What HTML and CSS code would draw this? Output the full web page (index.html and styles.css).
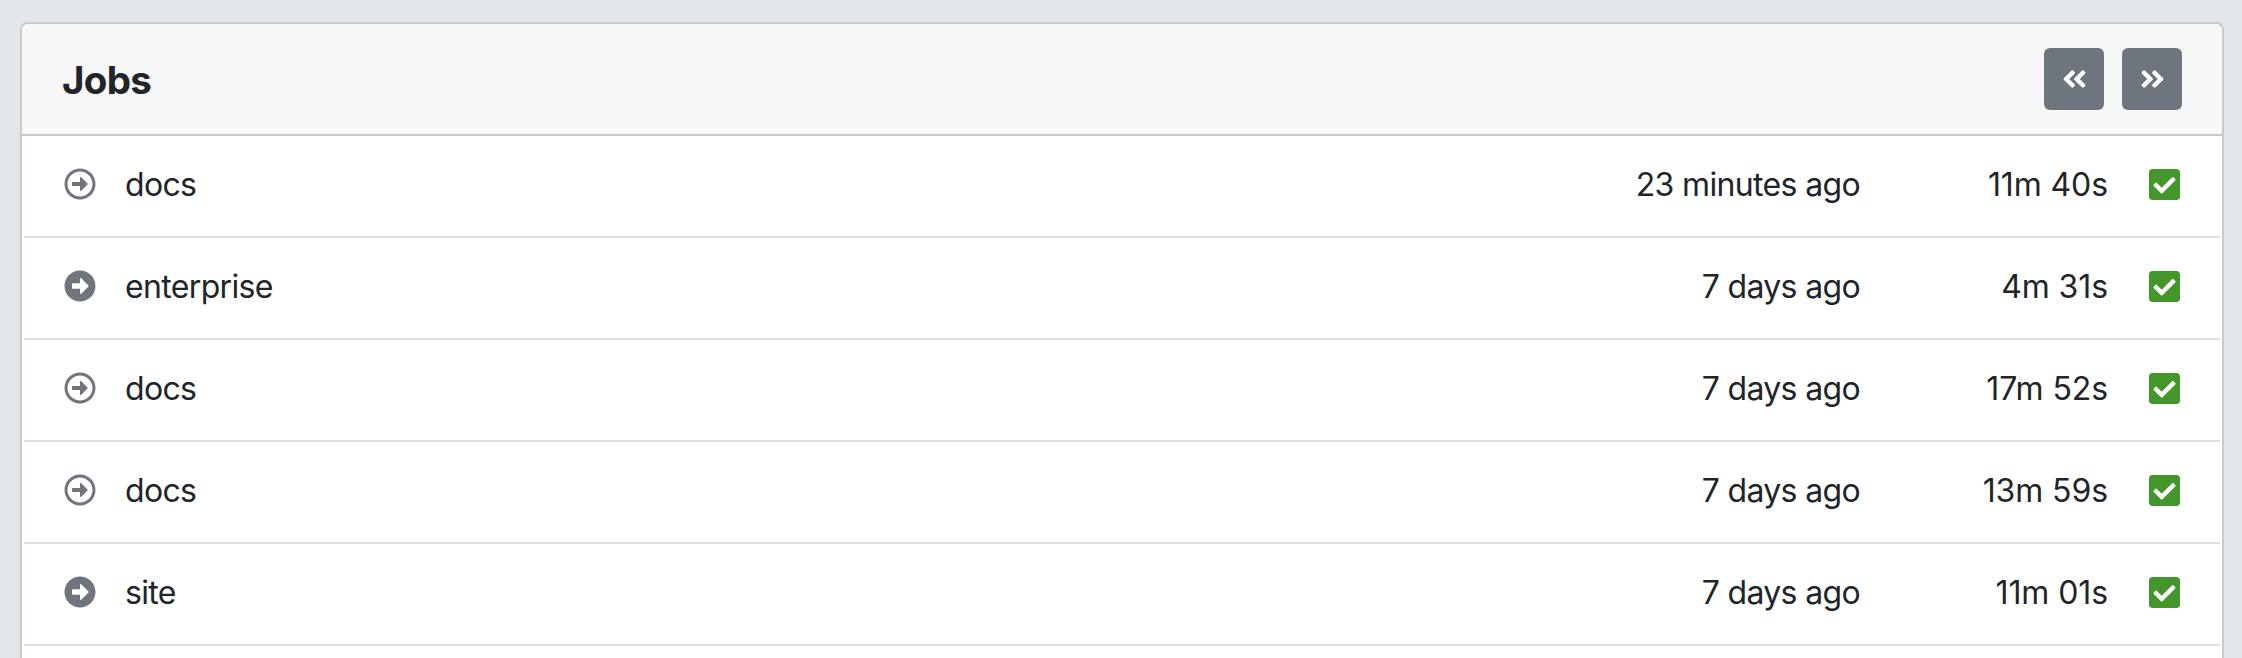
FILE: index.html
```html
<!DOCTYPE html>
<html lang="en">
<head>
<meta charset="utf-8">
<title>Jobs</title>
<link rel="stylesheet" href="styles.css">
</head>
<body>
<svg class="sprite" aria-hidden="true">
  <symbol id="circle-outline" viewBox="0 0 512 512"><path d="M504 256C504 119 393 8 256 8S8 119 8 256s111 248 248 248 248-111 248-248zm-448 0c0-110.500 89.500-200 200-200s200 89.500 200 200-89.500 200-200 200S56 366.500 56 256zm72 20v-40c0-6.600 5.400-12 12-12h116v-67c0-10.700 12.900-16 20.500-8.500l99 99c4.700 4.700 4.700 12.300 0 17l-99 99c-7.600 7.600-20.500 2.200-20.500-8.500v-67H140c-6.600 0-12-5.400-12-12z"/></symbol>
  <symbol id="circle-solid" viewBox="0 0 512 512"><path d="M256 8c137 0 248 111 248 248S393 504 256 504 8 393 8 256 119 8 256 8zM140 300h116v70.900c0 10.700 13 16.100 20.500 8.500l114.300-114.900c4.700-4.700 4.700-12.200 0-16.900l-114.300-115c-7.600-7.600-20.500-2.200-20.500 8.500V212H140c-6.600 0-12 5.400-12 12v64c0 6.600 5.400 12 12 12z"/></symbol>
  <symbol id="check" viewBox="0 32 448 448"><path d="M400 480H48c-26.510 0-48-21.490-48-48V80c0-26.510 21.490-48 48-48h352c26.510 0 48 21.490 48 48v352c0 26.510-21.490 48-48 48zm-204.686-98.059l184-184c6.248-6.248 6.248-16.379 0-22.627l-22.627-22.627c-6.248-6.248-16.379-6.249-22.628 0L184 302.745l-70.059-70.059c-6.248-6.248-16.379-6.248-22.628 0l-22.627 22.627c-6.248 6.248-6.248 16.379 0 22.627l104 104c6.249 6.250 16.379 6.250 22.628.001z"/></symbol>
  <symbol id="angles" viewBox="0 0 448 512"><path d="M223.700 239l136-136c9.400-9.400 24.600-9.400 33.900 0l22.600 22.600c9.400 9.400 9.400 24.600 0 33.900L319.900 256l96.400 96.400c9.400 9.400 9.400 24.600 0 33.900L393.700 409c-9.400 9.400-24.600 9.400-33.900 0l-136-136c-9.500-9.400-9.500-24.600-.1-34zm-192 34l136 136c9.400 9.400 24.600 9.400 33.900 0l22.600-22.600c9.400-9.400 9.400-24.600 0-33.900L127.900 256l96.400-96.400c9.400-9.400 9.400-24.600 0-33.900L201.700 103c-9.400-9.400-24.600-9.400-33.900 0l-136 136c-9.500 9.400-9.500 24.600-.1 34z"/></symbol>
</svg>
<main class="card">
  <header class="card-header">
    <h1 class="title">Jobs</h1>
    <nav class="pager">
      <button class="btn" aria-label="Previous"><svg class="angle"><use href="#angles"/></svg></button>
      <button class="btn" aria-label="Next"><svg class="angle flip"><use href="#angles"/></svg></button>
    </nav>
  </header>
  <ul class="jobs">
    <li class="job"><svg class="kind"><use href="#circle-outline"/></svg><span class="name">docs</span><span class="when">23 minutes ago</span><span class="took">11m 40s</span><svg class="status"><use href="#check"/></svg></li>
    <li class="job"><svg class="kind"><use href="#circle-solid"/></svg><span class="name">enterprise</span><span class="when">7 days ago</span><span class="took">4m 31s</span><svg class="status"><use href="#check"/></svg></li>
    <li class="job"><svg class="kind"><use href="#circle-outline"/></svg><span class="name">docs</span><span class="when">7 days ago</span><span class="took">17m 52s</span><svg class="status"><use href="#check"/></svg></li>
    <li class="job"><svg class="kind"><use href="#circle-outline"/></svg><span class="name">docs</span><span class="when">7 days ago</span><span class="took">13m 59s</span><svg class="status"><use href="#check"/></svg></li>
    <li class="job"><svg class="kind"><use href="#circle-solid"/></svg><span class="name">site</span><span class="when">7 days ago</span><span class="took">11m 01s</span><svg class="status"><use href="#check"/></svg></li>
  </ul>
</main>
</body>
</html>
```
FILE: styles.css
```css
* { box-sizing: border-box; }
body {
  margin: 0;
  height: 658px;
  padding: 22px 18px 0 20px;
  background: #e2e6e9;
  color: #212529;
  font-family: Inter, "Liberation Sans", sans-serif;
  font-size: 32px;
  line-height: 48px;
}
.sprite { display: none; }
.card {
  height: 636px;
  background: #fff;
  border: 2px solid #c9c9c9;
  border-bottom: 0;
  border-radius: 8px 8px 0 0;
  overflow: hidden;
}
.card-header {
  display: flex;
  justify-content: space-between;
  align-items: center;
  height: 112px;
  padding: 0 40px;
  background: #f7f7f7;
  border-bottom: 2px solid #c9c9c9;
}
.title {
  margin: 0;
  padding-top: 2px;
  font-size: 38.5px;
  font-weight: 700;
  letter-spacing: -0.7px;
}
.pager { display: flex; gap: 18px; }
.btn {
  display: flex;
  align-items: center;
  justify-content: center;
  width: 60px;
  height: 62px;
  padding: 0;
  border: 0;
  border-radius: 6px;
  background: #6e757d;
}
.angle { width: 25px; height: 28px; fill: #fff; }
.flip { transform: scaleX(-1); }
.jobs {
  list-style: none;
  margin: 0;
  padding: 0 2px;
}
.job {
  display: grid;
  grid-template-columns: 32px 1fr 300px 248px 72px;
  height: 102px;
  padding: 0 40px;
  border-bottom: 2px solid #dfdfdf;
}
.kind { width: 32px; height: 32px; margin-top: 32px; fill: #6e757d; }
.name, .when, .took { margin-top: 25px; letter-spacing: -0.65px; white-space: nowrap; }
.name { padding-left: 29px; }
.when, .took { text-align: right; }
.took { letter-spacing: -0.1px; }
.status { width: 31px; height: 31px; margin-top: 33px; justify-self: end; fill: #42962a; }
```
